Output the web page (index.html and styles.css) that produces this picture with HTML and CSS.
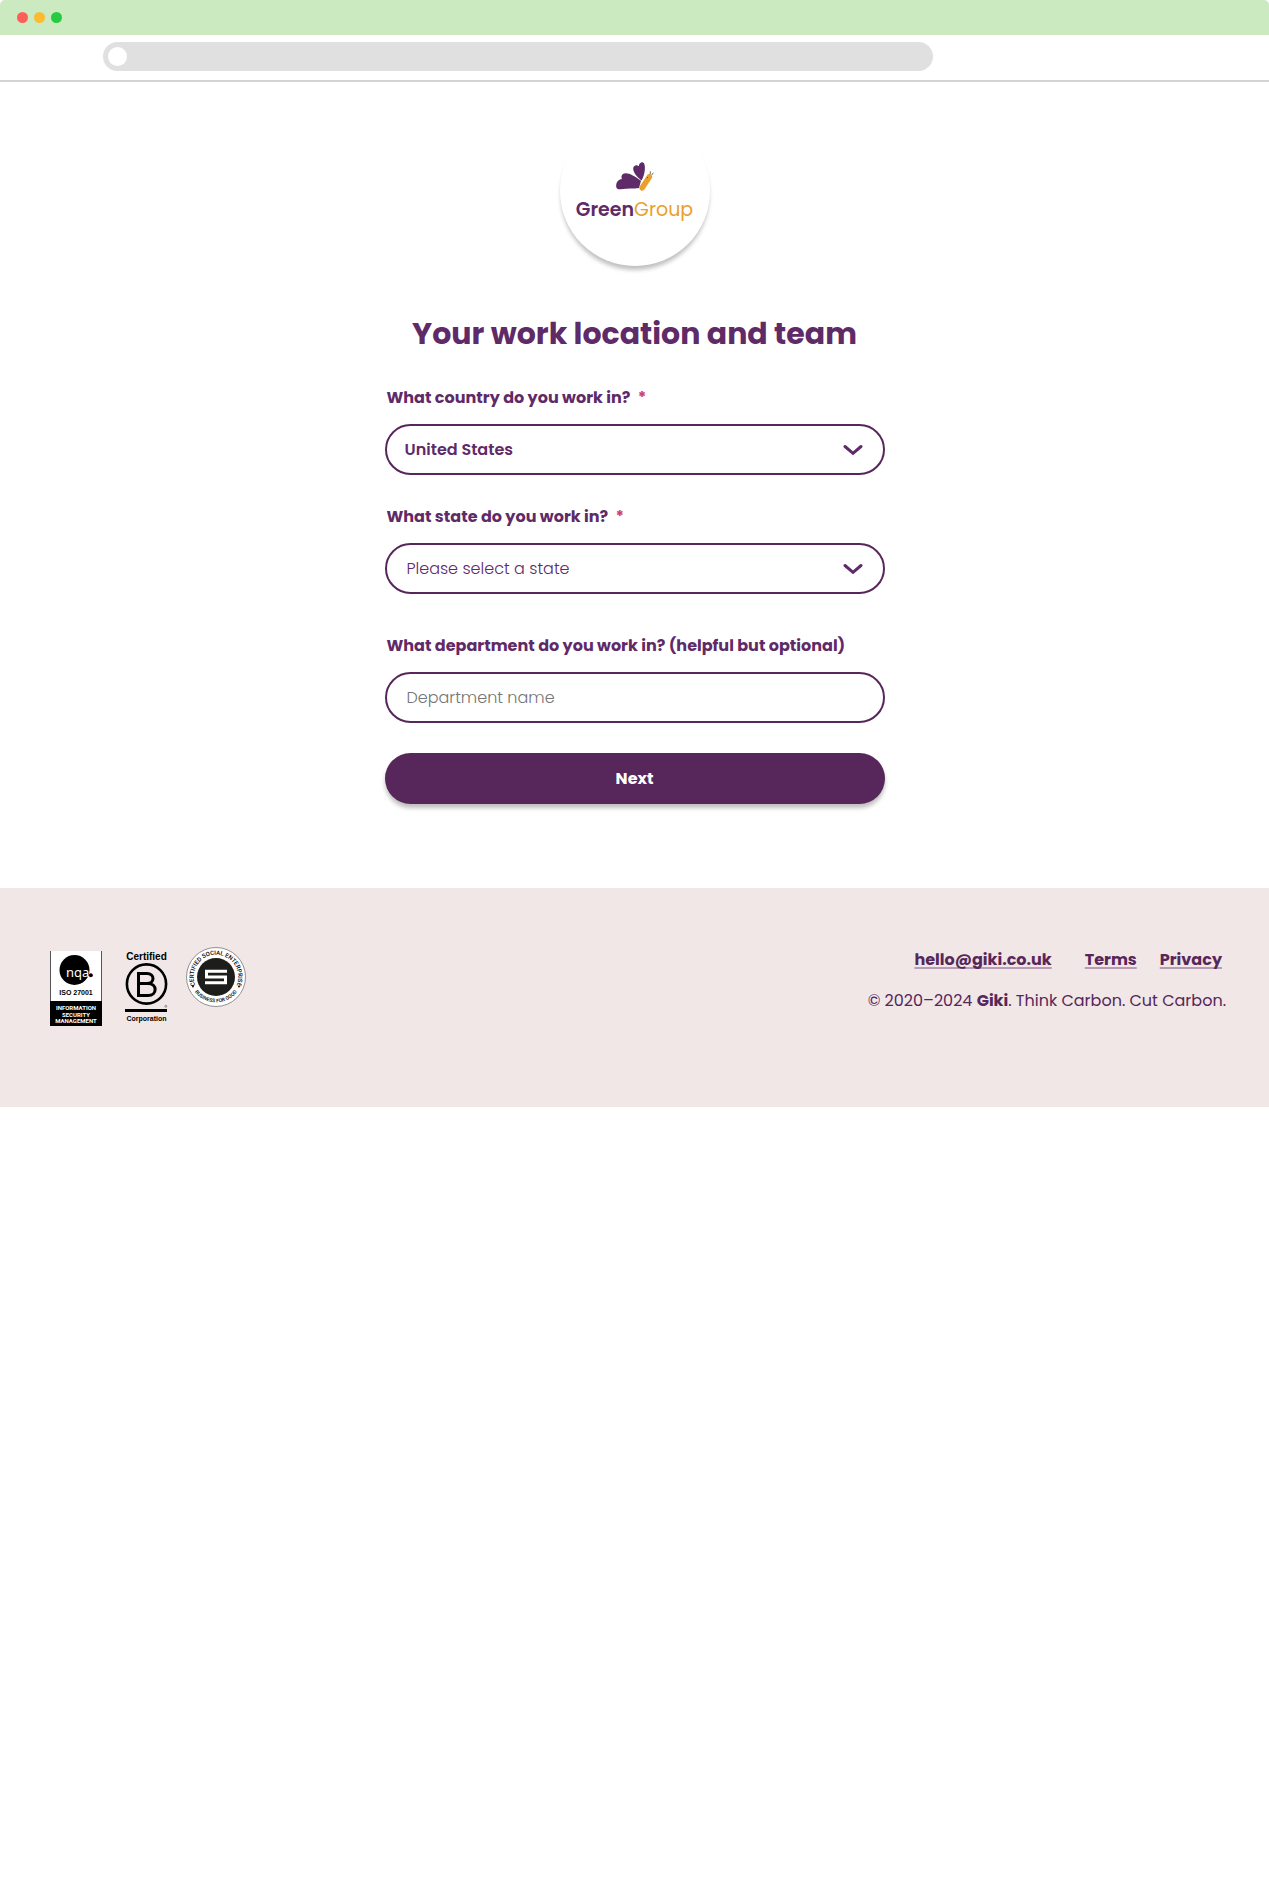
FILE: index.html
```html
<!DOCTYPE html>
<html lang="en">
<head>
<meta charset="utf-8">
<meta name="viewport" content="width=device-width, initial-scale=1">
<title>Your work location and team</title>
<link rel="stylesheet" href="styles.css">
</head>
<body>
<header class="browser">
  <div class="titlebar">
    <span class="dot dot-close"></span>
    <span class="dot dot-minimise"></span>
    <span class="dot dot-expand"></span>
  </div>
  <div class="toolbar">
    <div class="address"><span class="address-icon"></span></div>
  </div>
</header>

<main class="main">
  <div class="brand">
    <svg class="brand-mark" viewBox="0 0 38 30" aria-hidden="true">
      <path fill="#5f2a68" d="M25.500 18.500C20.500 14.500 17.300 10.500 17.200 6.800C17.100 3.500 20.600 2.300 22.800 4.200C23 1.400 25 0 27 .4C30.200 1.500 29.200 13 25.500 18.500Z"/>
      <path fill="#5f2a68" d="M25 18.800C19 14.500 14 11.200 9.500 11.300C6 11.600 4.600 14.200 6 17C1.500 17.500 0 21 .2 24.500C.4 27.500 3 27.500 5 27.200C12 26 17 27 23 26Z"/>
      <path stroke="#e9a02c" stroke-width="5.600" stroke-linecap="round" d="M26.200 25.800 33.300 15"/>
      <path stroke="#4a4038" stroke-width=".8" fill="none" d="M34.200 12.500 34.400 9.300M35.600 13.200 37.300 10.800M31 15.200 32 16"/>
    </svg>
    <p class="brand-name">Green<span class="brand-accent">Group</span></p>
  </div>

  <h1 class="title">Your work location and team</h1>

  <form class="form">
    <div class="field">
      <label class="label" for="country">What country do you work in? <span class="required">*</span></label>
      <div class="select-wrap">
        <select class="control select select-filled" id="country">
          <option selected>United States</option>
        </select>
        <svg class="chevron" viewBox="0 0 20 12" aria-hidden="true"><path d="M2 2.500 10 9.300 18 2.500"/></svg>
      </div>
    </div>
    <div class="field field-last-required">
      <label class="label" for="state">What state do you work in? <span class="required">*</span></label>
      <div class="select-wrap">
        <select class="control select" id="state">
          <option selected>Please select a state</option>
        </select>
        <svg class="chevron" viewBox="0 0 20 12" aria-hidden="true"><path d="M2 2.500 10 9.300 18 2.500"/></svg>
      </div>
    </div>
    <div class="field">
      <label class="label" for="department">What department do you work in? (helpful but optional)</label>
      <input class="control" id="department" type="text" placeholder="Department name">
    </div>
    <button class="next" type="button">Next</button>
  </form>
</main>

<footer class="footer">
  <div class="badges">
    <svg class="badge badge-nqa" viewBox="0 0 52 75" role="img" aria-label="NQA ISO 27001">
      <path fill="#fff" d="M0 0H52V75H0Z"/>
      <path stroke="#555" d="M.5 0V50M51.500 0V50"/>
      <circle cx="24.500" cy="19" r="15"/>
      <text class="nqa-name" x="16" y="26">nqa</text>
      <circle cx="40.800" cy="24.300" r="2"/>
      <text class="badge-text nqa-iso" x="26" y="44">ISO 27001</text>
      <path d="M0 50H52V75H0Z"/>
      <g class="badge-text nqa-scope">
        <text x="26" y="59">INFORMATION</text>
        <text x="26" y="66">SECURITY</text>
        <text x="26" y="72">MANAGEMENT</text>
      </g>
    </svg>
    <svg class="badge badge-bcorp" viewBox="0 0 43 72" role="img" aria-label="Certified B Corporation">
      <text class="badge-text bcorp-top" x="21.500" y="9">Certified</text>
      <circle cx="21.500" cy="33" r="19.600" fill="none" stroke="#000" stroke-width="2.600"/>
      <path fill="none" stroke="#000" stroke-width="3" d="M13.500 21V44.500H23C32.500 44.500 32.500 32.500 23 32.500H13.500M13.500 22.400H22C30 22.400 30 32.500 22 32.500"/>
      <circle cx="40.800" cy="55.300" r="1" fill="none" stroke="#555" stroke-width=".6"/>
      <path d="M0 58H42V61H0Z"/>
      <text class="badge-text bcorp-bottom" x="21.500" y="70">Corporation</text>
    </svg>
    <svg class="badge badge-social" viewBox="0 0 60 60" role="img" aria-label="Certified Social Enterprise">
      <defs>
        <path id="arc-top" d="M9.340 38.450A22.300 22.300 0 1 1 50.660 38.450"/>
        <path id="arc-bottom" d="M4 34A26.500 26.500 0 0 0 56 34"/>
      </defs>
      <circle cx="30" cy="30" r="29.500" fill="#fff" stroke="#777" stroke-width=".8"/>
      <circle cx="30" cy="30" r="19" fill="#1d1d1b"/>
      <text class="seal-text"><textPath href="#arc-top" startOffset="50%">CERTIFIED SOCIAL ENTERPRISE</textPath></text>
      <text class="seal-text seal-small"><textPath href="#arc-bottom" startOffset="50%">BUSINESS FOR GOOD</textPath></text>
      <circle cx="7" cy="39.500" r=".9"/>
      <circle cx="53" cy="39.500" r=".9"/>
      <path fill="none" stroke="#fff" stroke-width="3" d="M41 24.300H20.500V30H39.500V35.700H19"/>
    </svg>
  </div>
  <div class="footer-info">
    <nav class="links">
      <a class="link" href="mailto:hello@giki.co.uk">hello@giki.co.uk</a>
      <span class="legal">
        <a class="link" href="#terms">Terms</a>
        <a class="link" href="#privacy">Privacy</a>
      </span>
    </nav>
    <p class="copyright">© 2020–2024 <strong>Giki</strong>. Think Carbon. Cut Carbon.</p>
  </div>
</footer>
</body>
</html>
```
FILE: styles.css
```css
:root {
  --plum: #57265a;
  --violet: #5f2a68;
  --gold: #e9a02c;
}

* {
  box-sizing: border-box;
}

body {
  margin: 0;
  background: #fff;
  color: var(--violet);
  font-family: Poppins, Inter, "Open Sans", sans-serif;
  font-size: 16px;
  line-height: 24px;
}

.titlebar {
  display: flex;
  align-items: center;
  gap: 6px;
  height: 35px;
  padding-left: 17px;
  background: #cbeac0;
  border-top-left-radius: 5px;
  border-top-right-radius: 5px;
}

.dot {
  width: 11px;
  height: 11px;
  border-radius: 50%;
}

.dot-close { background: #fb6058; }
.dot-minimise { background: #fcbb2e; }
.dot-expand { background: #29c941; }

.toolbar {
  padding: 7px 336px 9px 103px;
  border-bottom: 2px solid #d3d3d3;
}

.address {
  display: flex;
  align-items: center;
  height: 29px;
  padding-left: 5px;
  border-radius: 15px;
  background: #e0e0e0;
}

.address-icon {
  width: 19px;
  height: 19px;
  border-radius: 50%;
  background: #fff;
}

.main {
  display: flex;
  flex-direction: column;
  align-items: center;
  padding: 34px 24px 84px;
}

.brand {
  display: flex;
  flex-direction: column;
  align-items: center;
  width: 150px;
  height: 150px;
  padding-top: 46px;
  border-radius: 50%;
  background: #fff;
  box-shadow: 0 5px 4px -1px rgba(0, 0, 0, 0.25);
}

.brand-mark {
  width: 38px;
  height: 30px;
  fill: none;
}

.brand-name {
  margin: 6px 0 0;
  font-size: 19px;
  font-weight: 600;
}

.brand-accent {
  color: var(--gold);
  font-weight: 400;
}

.title {
  margin: 48px 0 32px;
  font-size: 30px;
  line-height: 40px;
  font-weight: 700;
  text-align: center;
}

.form {
  display: flex;
  flex-direction: column;
  gap: 30px;
  width: 100%;
  max-width: 500px;
}

.field {
  display: flex;
  flex-direction: column;
  gap: 14px;
}

.field-last-required {
  margin-bottom: 10px;
}

.label {
  padding-left: 2px;
  font-weight: 700;
}

.required {
  margin-left: 4px;
  color: #cf3f6c;
}

.select-wrap {
  position: relative;
}

.control {
  display: block;
  width: 100%;
  height: 51px;
  padding: 0 20px;
  border: 2px solid var(--plum);
  border-radius: 26px;
  background: #fff;
  color: var(--violet);
  font: inherit;
  font-weight: 300;
}

.control::placeholder {
  color: #757575;
  opacity: 1;
}

.select {
  appearance: none;
}

.select-filled {
  padding-left: 18px;
  font-weight: 600;
}

.chevron {
  position: absolute;
  top: 20px;
  right: 22px;
  width: 20px;
  height: 12px;
  fill: none;
  stroke: var(--violet);
  stroke-width: 3;
  stroke-linecap: round;
  pointer-events: none;
}

.next {
  height: 51px;
  border: 0;
  border-radius: 26px;
  background: var(--plum);
  color: #fff;
  font: inherit;
  font-weight: 700;
  box-shadow: 0 4px 4px rgba(0, 0, 0, 0.25);
}

.footer {
  display: flex;
  justify-content: space-between;
  padding: 59px 43px 81px 50px;
  background: #f0e7e6;
  color: var(--plum);
}

.badges {
  display: flex;
  align-items: flex-start;
}

.badge-nqa {
  width: 52px;
  height: 75px;
  margin: 4px 23px 0 0;
}

.badge-bcorp {
  width: 43px;
  height: 72px;
  margin: 4px 18px 0 0;
}

.badge-social {
  width: 60px;
  height: 60px;
}

.badge-text {
  font-family: "Liberation Sans", Arial, sans-serif;
  font-weight: 700;
  text-anchor: middle;
}

.nqa-name {
  fill: #fff;
  font-family: "Noto Sans", sans-serif;
  font-size: 13px;
}

.nqa-iso { font-size: 7px; }

.nqa-scope {
  fill: #fff;
  font-family: Roboto, sans-serif;
  font-size: 6px;
}

.bcorp-top { font-size: 10px; }
.bcorp-bottom { font-size: 7px; }

.seal-text {
  font-family: Roboto, sans-serif;
  font-size: 6px;
  font-weight: 500;
  text-anchor: middle;
}

.seal-small { font-size: 5px; }

.footer-info {
  display: flex;
  flex-direction: column;
  align-items: flex-end;
  gap: 17px;
}

.links {
  display: flex;
  gap: 33px;
  padding: 1px 4px 0 0;
}

.legal {
  display: flex;
  gap: 23px;
}

.link {
  color: inherit;
  font-weight: 700;
  text-decoration-color: #b79cb5;
  text-decoration-thickness: 2px;
  text-underline-offset: 2px;
  text-decoration-skip-ink: none;
}

.copyright {
  margin: 0;
}
```
